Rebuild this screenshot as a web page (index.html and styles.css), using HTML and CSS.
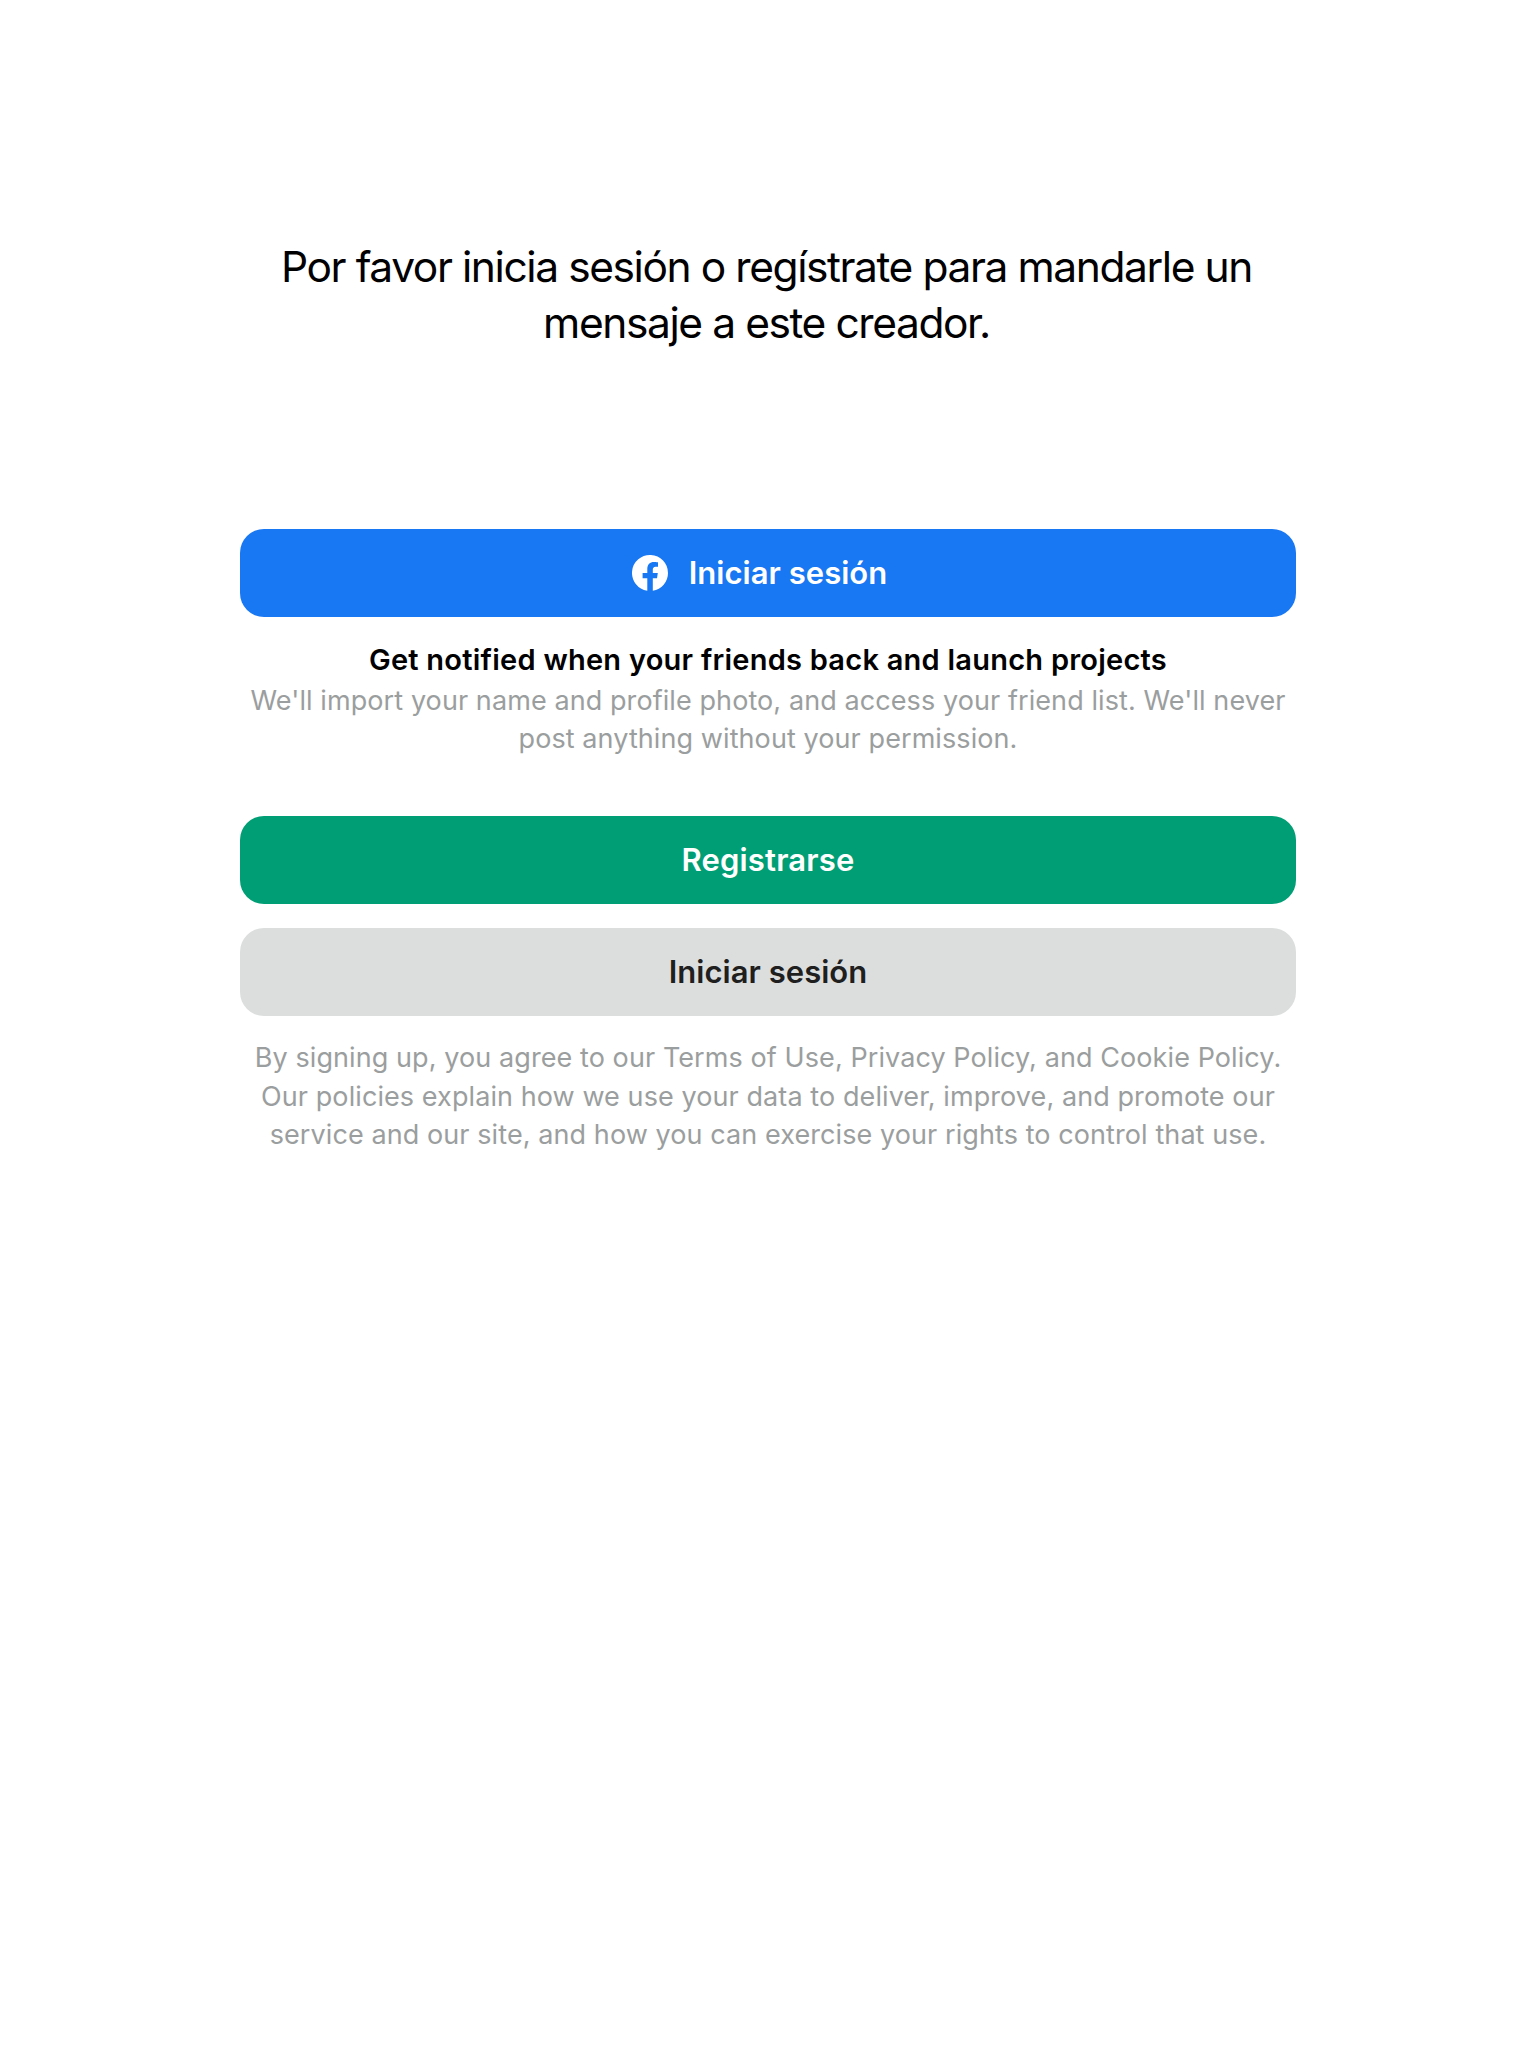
FILE: index.html
```html
<!DOCTYPE html>
<html lang="es">
<head>
<meta charset="utf-8">
<title>Iniciar sesión</title>
<link rel="stylesheet" href="styles.css">
</head>
<body>
<main class="login">
  <h1 class="title"><span class="line">Por favor inicia sesión o regístrate para mandarle un</span> <span class="line">mensaje a este creador.</span></h1>
  <button class="button button-facebook" type="button">
    <svg class="facebook-icon" viewBox="0 0 36 36" aria-hidden="true"><path fill="currentColor" d="M36 18A18 18 0 1 0 15.300 35.800V23.200H10.600V18H15.300V14C15.300 9.500 17.900 7 22 7C24 7 26 7.350 26 7.350V11.800H23.700C21.500 11.800 20.800 13.200 20.800 14.600V18H25.800L25 23.200H20.800V35.800A18 18 0 0 0 36 18Z"/></svg>
    <span>Iniciar sesión</span>
  </button>
  <p class="lead"><span class="line">Get notified when your friends back and launch projects</span></p>
  <p class="note note-facebook"><span class="line">We'll import your name and profile photo, and access your friend list. We'll never</span> <span class="line">post anything without your permission.</span></p>
  <button class="button button-signup" type="button"><span>Registrarse</span></button>
  <button class="button button-login" type="button"><span>Iniciar sesión</span></button>
  <p class="note note-terms"><span class="line">By signing up, you agree to our Terms of Use, Privacy Policy, and Cookie Policy.</span> <span class="line">Our policies explain how we use your data to deliver, improve, and promote our</span> <span class="line">service and our site, and how you can exercise your rights to control that use.</span></p>
</main>
</body>
</html>
```
FILE: styles.css
```css
* {
  box-sizing: border-box;
}

body {
  margin: 0;
  background: #fff;
  color: #000;
  font-family: Inter, "Liberation Sans", sans-serif;
}

.login {
  width: 1056px;
  margin: 0 auto;
  padding-top: 239px;
  text-align: center;
}

.line {
  display: block;
  white-space: nowrap;
}

.title {
  margin: 0 0 178px;
  padding-right: 3px;
  font-size: 42.5px;
  font-weight: 400;
  line-height: 56px;
  letter-spacing: -1.42px;
}

.button {
  display: flex;
  align-items: center;
  justify-content: center;
  gap: 21px;
  width: 100%;
  height: 88px;
  padding: 0;
  border: 0;
  border-radius: 24px;
  color: #fff;
  font: 600 31px/40px Inter, "Liberation Sans", sans-serif;
  letter-spacing: 0.03px;
}

.button-facebook {
  padding-right: 17px;
  background: #1877f2;
}

.facebook-icon {
  width: 36px;
  height: 36px;
}

.button-signup {
  background: #009e74;
  letter-spacing: 0.15px;
}

.button-login {
  margin-top: 24px;
  background: #dcdedd;
  color: #1f1f1f;
}

.lead {
  margin: 23px 0 0;
  font-size: 29px;
  font-weight: 600;
  line-height: 40px;
  letter-spacing: 0.245px;
}

.note {
  margin: 0;
  color: #9b9e9e;
  font-size: 27px;
  letter-spacing: 0.085px;
}

.note-facebook {
  margin: 2px 0 58px;
  line-height: 38px;
}

.note-terms {
  margin-top: 23px;
  line-height: 38.5px;
}
```
